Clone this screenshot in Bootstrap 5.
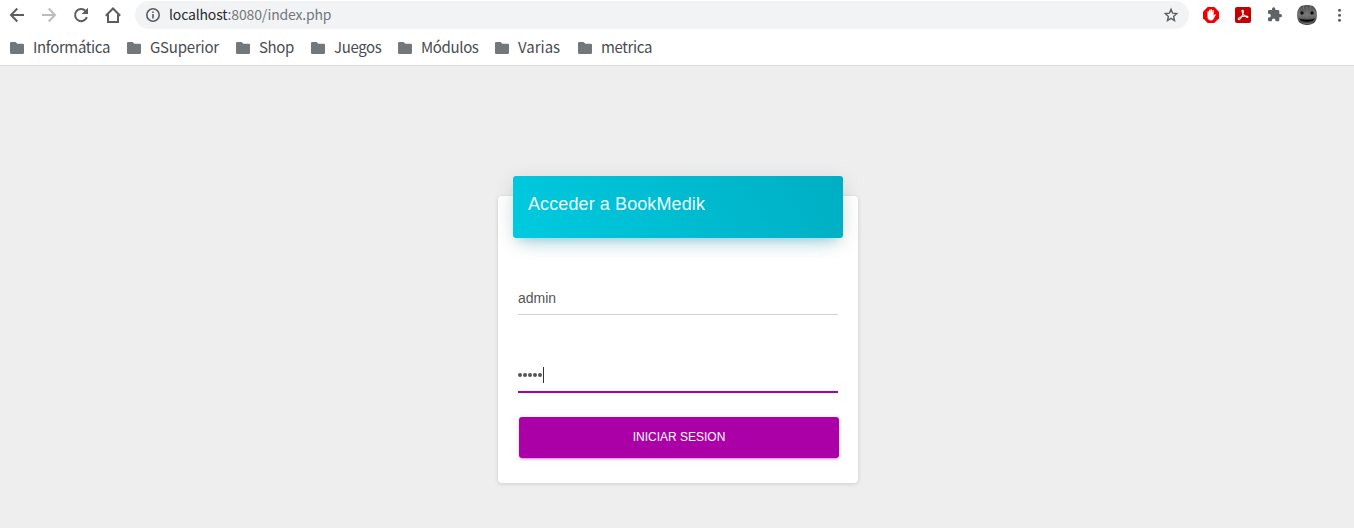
<!DOCTYPE html>
<html lang="es">
<head>
<meta charset="utf-8">
<meta name="viewport" content="width=device-width, initial-scale=1">
<title>Acceder a BookMedik</title>
<link href="https://cdn.jsdelivr.net/npm/bootstrap@5.3.0/dist/css/bootstrap.min.css" rel="stylesheet">
<style>
body{background:#eee;font-family:"Liberation Sans",Arial,sans-serif;font-size:14px;color:#555;min-height:100vh}
svg{display:block;flex:none}
.browser{height:66px;border-bottom:1px solid #d9dadc;font-family:"Noto Sans CJK SC","Noto Sans",sans-serif;color:#484c50}
.toolbar{height:30px;padding-left:7px}
.nav-icons{gap:12px;width:128px;flex:none}
.address{height:28px;border-radius:14px;background:#f1f3f4;width:1054px;flex:none;padding:0 10px;font-size:14px;line-height:26px;color:#74787c}
.url{letter-spacing:-.16px;height:28px}
.address b{font-weight:400;color:#292a2d}
.bookmarks{height:35px;padding-left:10px;font-size:15px}
.bookmarks>span{gap:9px;flex:none}
.bookmarks span span{letter-spacing:-.36px;height:34px;line-height:32px}
.bookmarks>span:nth-child(1){width:117px}
.bookmarks>span:nth-child(2){width:109px}
.bookmarks>span:nth-child(3){width:75px}
.bookmarks>span:nth-child(4){width:87px}
.bookmarks>span:nth-child(5){width:97px}
.bookmarks>span:nth-child(6){width:83px}
.bookmarks>span:nth-child(2) span{letter-spacing:-.22px}
.bookmarks>span:nth-child(6) span{letter-spacing:0}
.extensions{gap:14px;margin-left:13px}
.avatar{margin-left:-1px}
.login{width:360px;height:287px;margin-top:130px;margin-left:498px;border-radius:4px;border:0;box-shadow:0 1px 4px rgba(0,0,0,.14);padding:0 15px}
.login-head{height:62px;margin-top:-20px;border-radius:3px;background:linear-gradient(60deg,#00cadf,#00aec3);box-shadow:0 12px 20px -10px rgba(0,188,212,.28),0 4px 20px 0 rgba(0,0,0,.12),0 7px 8px -5px rgba(0,188,212,.2);padding:16px 15px 14px;color:#fff}
.login-head h4{font-size:18px;line-height:25px;font-weight:400;letter-spacing:.1px;margin:0;color:rgba(255,255,255,.94)}
.login-form{padding:0 5px}
.line-field{height:36px;border:0;border-bottom:1px solid #d2d2d2;border-radius:0;padding:0;font-size:14px;line-height:20px;color:#555;background:none}
.user-field{margin-top:41px;padding-top:2px}
.pass-field{height:37px;margin-top:41px;padding-top:2px;border-bottom:2px solid #ab00a8}
.dots{gap:1px}
.dots i{width:4px;height:4px;border-radius:50%;background:#555}
.caret{width:1px;height:16px;margin-left:1px;background:#333}
.btn-login{width:320px;height:41px;margin:24px 0 0 1px;background:#ab00a8;color:#fff;font-size:12px;line-height:18px;border:0;border-radius:3px;padding:0 0 2px;box-shadow:0 2px 2px rgba(171,0,168,.14),0 3px 1px -2px rgba(171,0,168,.2),0 1px 5px rgba(171,0,168,.12)}
.btn-login:hover{background:#ab00a8;color:#fff}
</style>
</head>
<body>
<svg width="0" height="0" class="position-absolute" aria-hidden="true">
  <symbol id="folder" viewBox="0 0 14 12"><path fill="#72777b" d="M1.2 0H5.6L7.3 1.8H12.8Q14 1.8 14 3V10.8Q14 12 12.8 12H1.2Q0 12 0 10.8V1.2Q0 0 1.2 0Z"/></symbol>
</svg>
<header class="browser bg-white">
  <div class="toolbar d-flex align-items-center">
    <div class="nav-icons d-flex align-items-center">
      <svg width="20" height="20" viewBox="0 0 20 20" fill="none" stroke="#5a5e63" stroke-width="2"><path d="M17 10H4.5M10.3 3.5L4 10l6.3 6.5"/></svg>
      <svg width="20" height="20" viewBox="0 0 20 20" fill="none" stroke="#babcbe" stroke-width="2"><path d="M3 10h12.5M9.7 3.5L16 10l-6.3 6.5"/></svg>
      <svg width="20" height="20" viewBox="0 0 20 20"><path d="M15.9 12.2A6.1 6.1 0 1 1 14.5 5.8" fill="none" stroke="#5a5e63" stroke-width="2"/><path d="M17 2.8V9h-6.3z" fill="#5a5e63"/></svg>
      <svg width="20" height="20" viewBox="0 0 20 20" fill="none" stroke="#5a5e63" stroke-width="2"><path d="M2.8 10.7L10 3.5l7.2 7.2M5 9.5V17h10V9.5"/></svg>
    </div>
    <div class="address d-flex align-items-center">
      <svg width="16" height="16" viewBox="0 0 16 16"><circle cx="8" cy="8" r="6.2" fill="none" stroke="#5a5e63" stroke-width="1.6"/><path d="M7.2 7h1.6v4.4H7.2zM7.2 4.4h1.6V6H7.2z" fill="#5a5e63"/></svg>
      <span class="url ms-2"><b>localhost</b>:8080/index.php</span>
      <svg class="ms-auto" width="16" height="16" viewBox="0 0 16 16"><path d="M8 2.3l1.6 3.9 4.1.4-3.1 2.8.9 4.1L8 11.3l-3.5 2.2.9-4.1-3.1-2.8 4.1-.4z" fill="none" stroke="#5a5e63" stroke-width="1.4"/></svg>
    </div>
    <div class="extensions d-flex align-items-center">
      <svg width="18" height="18" viewBox="0 0 18 18"><path d="M5.7 1h6.6L17 5.7v6.6L12.3 17H5.7L1 12.3V5.7z" fill="#f00000"/><path d="M5.5 9V5.5q.7-.8 1.3 0V8l.3-4q.6-.9 1.3 0v3.5L8.7 3.4q.7-.8 1.3 0l.1 4.2.4-3.3q.7-.8 1.2 0v5.5l1-1.3q.9-.6 1.1.2l-2.1 4.1q-.7 1.7-2.7 1.7-3.3-.1-3.5-3.2z" fill="#fff"/></svg>
      <svg width="18" height="18" viewBox="0 0 18 18"><rect x="1" y="1" width="16" height="16" rx="2" fill="#c40000"/><path d="M8.3 4.3c1.5-.7 1.1 2.4.4 4.1-.8 2-2.3 4.9-3.6 5.2-2.1-.1.2-2.5 3.1-3.1 2.3-.5 5.5-.8 5.8.4-.4 1.4-3.4-.6-4.7-2.5-1-1.6-1.7-3.7-1-4.1z" fill="none" stroke="#fff" stroke-width="1.1"/></svg>
      <svg width="18" height="18" viewBox="-1 -1 27 27"><path fill="#5f6368" d="M20.5 11H19V7c0-1.1-.9-2-2-2h-4V3.5a2.5 2.5 0 0 0-5 0V5H4c-1.1 0-2 .9-2 2v3.8h1.5a2.7 2.7 0 0 1 0 5.4H2V20c0 1.1.9 2 2 2h3.8v-1.5a2.7 2.7 0 0 1 5.4 0V22H17c1.1 0 2-.9 2-2v-4h1.5a2.5 2.5 0 0 0 0-5z"/></svg>
      <svg class="avatar" width="20" height="20" viewBox="0 0 20 20"><defs><linearGradient id="face" x2="0" y2="1"><stop stop-color="#4c4c4c"/><stop offset=".5" stop-color="#777"/><stop offset=".75" stop-color="#555"/><stop offset="1" stop-color="#333"/></linearGradient></defs><path d="M4 1Q10-1 16 1q4 3 4 9 0 5-3 8-7 4-14 0-3-3-3-8 0-6 4-9z" fill="url(#face)"/><path d="M10 1v12M6.5 1v3M13.5 1v3" stroke="#888" stroke-width=".6"/><circle cx="5" cy="8" r="1.7" fill="#111"/><circle cx="15" cy="8" r="1.7" fill="#111"/><path d="M2.2 13.5Q10 16.2 17.8 13.5 16 16.7 10 16.7T2.2 13.5z" fill="#050505"/><path d="M4.5 17.9q5.5 1.4 11 0" stroke="#777" fill="none" stroke-width=".9"/></svg>
      <svg width="18" height="18" viewBox="0 0 18 18" fill="#5a5e63"><circle cx="8.5" cy="4.3" r="1.5"/><circle cx="8.5" cy="9.3" r="1.5"/><circle cx="8.5" cy="14.3" r="1.5"/></svg>
    </div>
  </div>
  <nav class="bookmarks d-flex align-items-center">
    <span class="d-flex align-items-center"><svg width="14" height="12"><use href="#folder"/></svg><span>Informática</span></span>
    <span class="d-flex align-items-center"><svg width="14" height="12"><use href="#folder"/></svg><span>GSuperior</span></span>
    <span class="d-flex align-items-center"><svg width="14" height="12"><use href="#folder"/></svg><span>Shop</span></span>
    <span class="d-flex align-items-center"><svg width="14" height="12"><use href="#folder"/></svg><span>Juegos</span></span>
    <span class="d-flex align-items-center"><svg width="14" height="12"><use href="#folder"/></svg><span>Módulos</span></span>
    <span class="d-flex align-items-center"><svg width="14" height="12"><use href="#folder"/></svg><span>Varias</span></span>
    <span class="d-flex align-items-center"><svg width="14" height="12"><use href="#folder"/></svg><span>metrica</span></span>
  </nav>
</header>
<main class="d-flex">
  <section class="card login">
    <div class="login-head"><h4>Acceder a BookMedik</h4></div>
    <form class="login-form">
      <input class="form-control line-field user-field shadow-none" type="text" value="admin" aria-label="Usuario">
      <div class="line-field pass-field d-flex align-items-center" role="textbox" aria-label="Contraseña">
        <span class="dots d-flex"><i></i><i></i><i></i><i></i><i></i></span><span class="caret"></span>
      </div>
      <button type="button" class="btn btn-login">INICIAR SESION</button>
    </form>
  </section>
</main>
<script src="https://cdn.jsdelivr.net/npm/bootstrap@5.3.0/dist/js/bootstrap.bundle.min.js"></script>
</body>
</html>
